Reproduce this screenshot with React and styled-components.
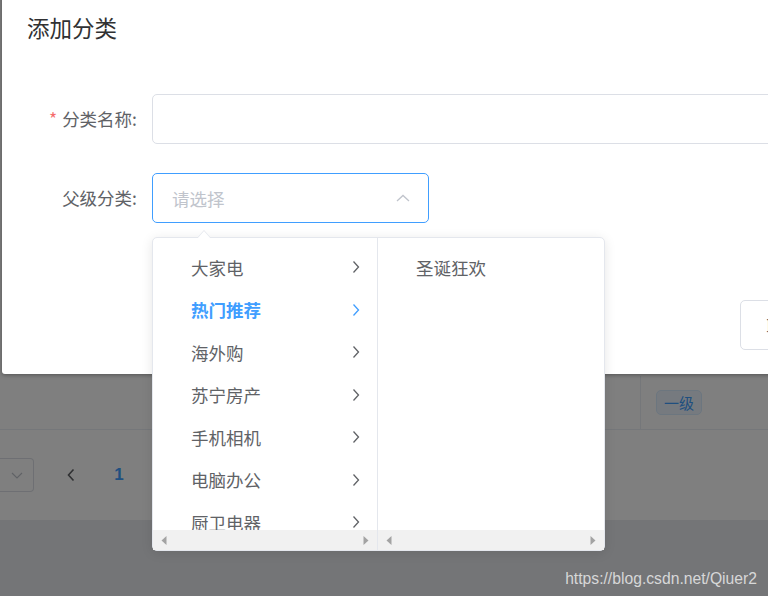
import React from 'react'
import styled, { createGlobalStyle } from 'styled-components'

const GlobalStyle = createGlobalStyle`
  html, body {
    margin: 0;
    padding: 0;
    background: #e9ebee;
  }
  * {
    box-sizing: border-box;
  }
`

const Screen = styled.div`
  position: relative;
  width: 768px;
  height: 596px;
  overflow: hidden;
  background: #e9ebee;
  font-family: "Noto Sans CJK SC", "Liberation Sans", sans-serif;
  color: #606266;
`

/* page under the mask */
const Card = styled.div`
  display: flex;
  flex-direction: column;
  height: 520px;
  background: #ffffff;
`

const CardTop = styled.div`
  height: 376px;
`

const TableRow = styled.div`
  display: grid;
  grid-template-columns: 640px 1fr;
  height: 54px;
  border-bottom: 1px solid #ebeef5;
`

const Cell = styled.div`
  display: flex;
  align-items: center;
  padding-left: 15px;
  border-left: ${p => (p.$divided ? '1px solid #ebeef5' : 'none')};
`

const Tag = styled.span`
  display: inline-flex;
  align-items: center;
  height: 25px;
  padding: 0 7px;
  font-size: 15px;
  color: #409eff;
  background: #ecf5ff;
  border: 1px solid #d9ecff;
  border-radius: 5px;
`

const Pagination = styled.div`
  display: flex;
  align-items: center;
  flex: 1;
`

const SizeSelect = styled.div`
  display: flex;
  align-items: center;
  justify-content: flex-end;
  width: 34px;
  height: 34px;
  padding-right: 10px;
  border: 1px solid #dcdfe6;
  border-left: none;
  border-radius: 0 4px 4px 0;
  color: #c0c4cc;
`

const PageBtn = styled.span`
  display: inline-flex;
  justify-content: center;
  align-items: center;
  width: 40px;
  margin-left: ${p => p.$ml || 0}px;
  font-family: "Liberation Sans", sans-serif;
  font-size: 17px;
  font-weight: ${p => (p.$active ? 700 : 400)};
  color: ${p => (p.$active ? '#409eff' : '#606266')};
`

const Mask = styled.div`
  position: absolute;
  inset: 0;
  background: rgba(0, 0, 0, 0.5);
`

/* dialog */
const Dialog = styled.div`
  position: absolute;
  left: 2px;
  top: -11px;
  width: 960px;
  height: 385px;
  background: #ffffff;
  border-radius: 3px;
  box-shadow: 0 1px 4px rgba(0, 0, 0, 0.35);
  display: flex;
  flex-direction: column;
`

const Header = styled.div`
  padding: 23px 25px 12px;
`

const Title = styled.span`
  font-size: 22.5px;
  line-height: 30px;
  color: #303133;
`

const Body = styled.div`
  padding: 40px 25px 0;
`

const FormItem = styled.div`
  display: flex;
  height: 50px;
  margin-bottom: 29px;

  &:last-child {
    margin-bottom: 0;
  }
`

const Label = styled.label`
  width: 125px;
  padding-right: 15px;
  text-align: right;
  font-size: 17.5px;
  line-height: 50px;
  color: #606266;
`

const Star = styled.span`
  color: #f56c6c;
  margin-right: 5px;
`

const Input = styled.div`
  display: flex;
  align-items: center;
  justify-content: space-between;
  width: ${p => (p.$width ? `${p.$width}px` : 'auto')};
  flex: ${p => (p.$width ? '0 0 auto' : '1')};
  height: 50px;
  padding: 0 18px 0 19px;
  border: 1px solid ${p => (p.$focus ? '#409eff' : '#dcdfe6')};
  border-radius: 5px;
  font-size: 17.5px;
`

const Placeholder = styled.span`
  color: #c0c4cc;
`

const Footer = styled.div`
  display: flex;
  justify-content: flex-end;
  gap: 15px;
  margin-top: auto;
  padding: 0 25px 24px;
`

const Button = styled.button`
  height: 50px;
  padding: 0 25px;
  font-family: inherit;
  font-size: 17.5px;
  color: ${p => (p.$primary ? '#ffffff' : '#606266')};
  background: ${p => (p.$primary ? '#409eff' : '#ffffff')};
  border: 1px solid ${p => (p.$primary ? '#409eff' : '#dcdfe6')};
  border-radius: 5px;
`

/* cascader dropdown */
const Popper = styled.div`
  position: absolute;
  left: 152px;
  top: 237px;
  width: 453px;
  height: 314px;
  display: flex;
  background: #ffffff;
  border: 1px solid #e4e7ed;
  border-radius: 5px;
  box-shadow: 0 2px 12px rgba(0, 0, 0, 0.1);

  &::before,
  &::after {
    content: '';
    position: absolute;
    left: 44px;
    width: 0;
    height: 0;
    border: 7px solid transparent;
    border-top-width: 0;
  }

  &::before {
    top: -8px;
    border-bottom: 8px solid #e4e7ed;
  }

  &::after {
    top: -7px;
    border-bottom: 8px solid #ffffff;
  }
`

const Panel = styled.div`
  display: flex;
  flex-direction: column;
  width: ${p => (p.$width ? `${p.$width}px` : 'auto')};
  flex: ${p => (p.$width ? '0 0 auto' : '1')};
  border-right: ${p => (p.$divided ? '1px solid #e4e7ed' : 'none')};
  overflow: hidden;
`

const MenuList = styled.ul`
  height: 292px;
  margin: 0;
  padding: 8px 0 0;
  list-style: none;
  overflow: hidden;
`

const MenuItem = styled.li`
  display: flex;
  align-items: center;
  justify-content: space-between;
  height: 42.5px;
  padding: 0 17px 0 38px;
  font-size: 17.5px;
  color: ${p => (p.$active ? '#409eff' : '#606266')};
  font-weight: ${p => (p.$active ? 700 : 400)};
`

const ScrollBar = styled.div`
  display: flex;
  align-items: center;
  justify-content: space-between;
  height: 20px;
  padding: 0 8px;
  background: #f1f1f1;
`

const Watermark = styled.div`
  position: absolute;
  right: 11px;
  bottom: 8px;
  font-family: "Liberation Sans", sans-serif;
  font-size: 15.7px;
  color: rgba(255, 255, 255, 0.72);
`

const ChevronRight = () => (
  <svg width="8" height="14" viewBox="0 0 8 14">
    <polyline points="1.5,1.5 6.5,7 1.5,12.5" fill="none" stroke="currentColor" strokeWidth="1.3" />
  </svg>
)

const ChevronLeft = () => (
  <svg width="8" height="14" viewBox="0 0 8 14">
    <polyline points="6.5,1.5 1.5,7 6.5,12.5" fill="none" stroke="currentColor" strokeWidth="1.6" />
  </svg>
)

const ChevronUp = () => (
  <svg width="14" height="8" viewBox="0 0 14 8">
    <polyline points="1,7 7,1.5 13,7" fill="none" stroke="#c0c4cc" strokeWidth="1.3" />
  </svg>
)

const ChevronDown = () => (
  <svg width="12" height="7" viewBox="0 0 12 7">
    <polyline points="1,1 6,6 11,1" fill="none" stroke="currentColor" strokeWidth="1.2" />
  </svg>
)

const ScrollArrow = ({ dir }) => (
  <svg width="6" height="9" viewBox="0 0 6 9">
    {dir === 'left'
      ? <polygon points="5.5,0 5.5,9 0.5,4.5" fill="#a3a3a3" />
      : <polygon points="0.5,0 0.5,9 5.5,4.5" fill="#a3a3a3" />}
  </svg>
)

const firstLevel = ['大家电', '热门推荐', '海外购', '苏宁房产', '手机相机', '电脑办公', '厨卫电器']

export default function App() {
  return (
    <>
      <GlobalStyle />
      <Screen>
        <Card>
          <CardTop />
          <TableRow>
            <Cell />
            <Cell $divided><Tag>一级</Tag></Cell>
          </TableRow>
          <Pagination>
            <SizeSelect><ChevronDown /></SizeSelect>
            <PageBtn $ml={17}><ChevronLeft /></PageBtn>
            <PageBtn $ml={8} $active>1</PageBtn>
          </Pagination>
        </Card>

        <Mask />

        <Dialog>
          <Header>
            <Title>添加分类</Title>
          </Header>
          <Body>
            <FormItem>
              <Label><Star>*</Star>分类名称:</Label>
              <Input />
            </FormItem>
            <FormItem>
              <Label>父级分类:</Label>
              <Input $width={277} $focus>
                <Placeholder>请选择</Placeholder>
                <ChevronUp />
              </Input>
            </FormItem>
          </Body>
          <Footer>
            <Button>取 消</Button>
            <Button $primary>确 定</Button>
          </Footer>
        </Dialog>

        <Popper>
          <Panel $width={225} $divided>
            <MenuList>
              {firstLevel.map(name => (
                <MenuItem key={name} $active={name === '热门推荐'}>
                  <span>{name}</span>
                  <ChevronRight />
                </MenuItem>
              ))}
            </MenuList>
            <ScrollBar>
              <ScrollArrow dir="left" />
              <ScrollArrow dir="right" />
            </ScrollBar>
          </Panel>
          <Panel>
            <MenuList>
              <MenuItem>
                <span>圣诞狂欢</span>
              </MenuItem>
            </MenuList>
            <ScrollBar>
              <ScrollArrow dir="left" />
              <ScrollArrow dir="right" />
            </ScrollBar>
          </Panel>
        </Popper>

        <Watermark>https://blog.csdn.net/Qiuer2</Watermark>
      </Screen>
    </>
  )
}
